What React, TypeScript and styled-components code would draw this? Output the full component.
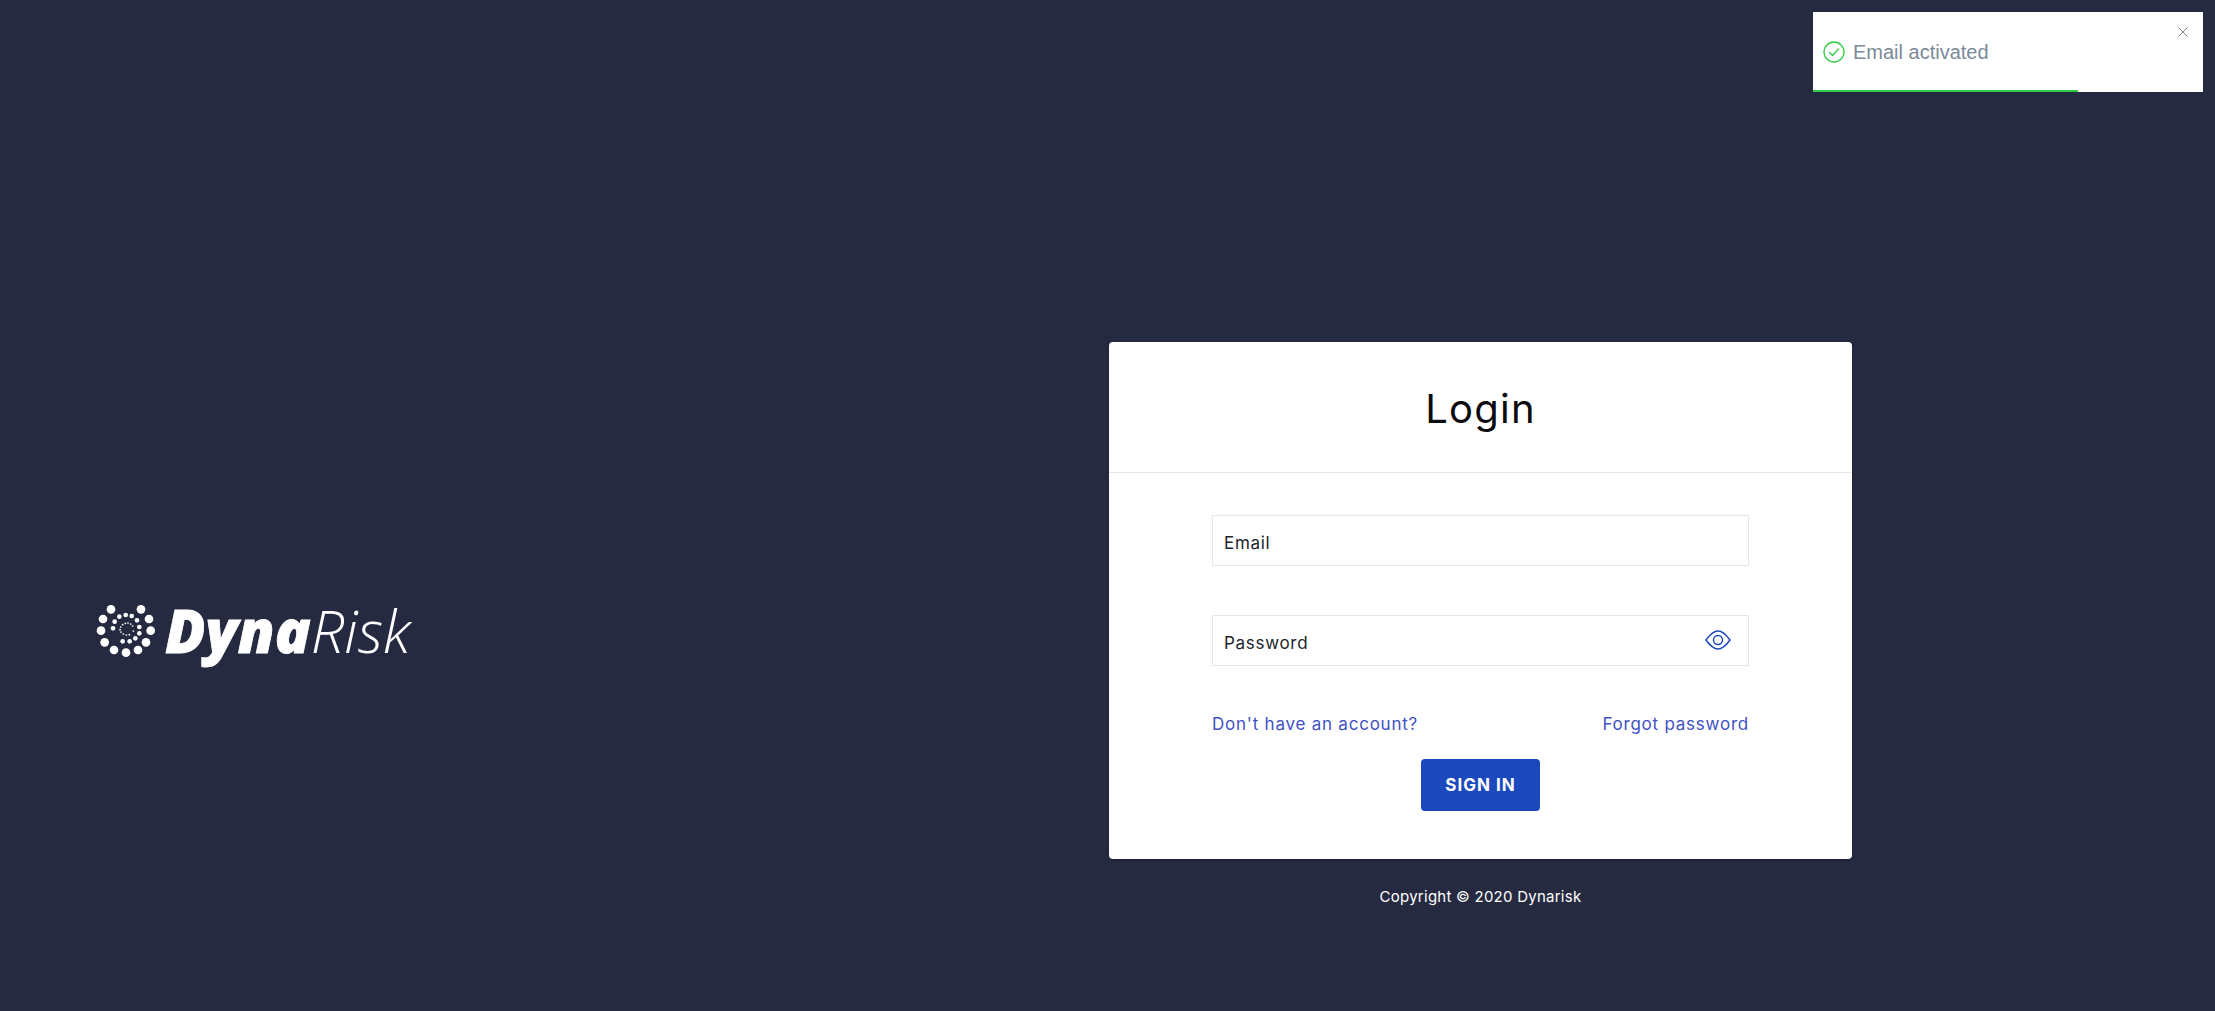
import React from "react";
import styled, { createGlobalStyle } from "styled-components";

const GlobalStyle = createGlobalStyle`
  html, body {
    margin: 0;
    padding: 0;
    background: #252a41;
    overflow: hidden;
  }
  * {
    box-sizing: border-box;
  }
`;

const OUTER_DOTS = [
  [63, 43], [153, 43], [39, 72], [177, 72], [33, 107], [182, 107],
  [44, 142], [168, 142], [72, 165], [108, 173], [144, 165],
];
const MIDDLE_DOTS = [
  [88, 65], [107, 60], [125, 63], [141, 76], [148, 96], [148, 115],
  [136, 130], [119, 139], [98, 139], [74, 80], [69, 100],
];
const INNER_DOTS = [
  [92, 96], [98, 89], [106, 85], [114, 84], [122, 87], [128, 93],
  [90, 104], [93, 111], [100, 117], [109, 120], [118, 119], [130, 108],
];

const LogoMark = () => (
  <LogoSvg viewBox="0 0 225 210" aria-hidden="true">
    {OUTER_DOTS.map(([x, y]) => <circle key={`o${x}${y}`} cx={x} cy={y} r={13} fill="#fff" />)}
    {MIDDLE_DOTS.map(([x, y]) => <circle key={`m${x}${y}`} cx={x} cy={y} r={7} fill="#fff" />)}
    {INNER_DOTS.map(([x, y]) => <circle key={`i${x}${y}`} cx={x} cy={y} r={2.6} fill="#fff" />)}
  </LogoSvg>
);

const EyeIcon = () => (
  <EyeSvg viewBox="0 0 26 20" fill="none" stroke="#1c48bd" strokeWidth="1.5" aria-hidden="true">
    <path d="M1 10C5 4.500 8.500 1 13 1s8 3.500 12 9c-4 5.500-7.500 9-12 9S5 15.500 1 10Z" strokeLinejoin="round" />
    <circle cx="13" cy="10" r="4.500" />
  </EyeSvg>
);

export default function App() {
  return (
    <>
      <GlobalStyle />
      <Page>
        <Toast>
          <ToastBody>
            <svg width="22" height="22" viewBox="0 0 22 22" fill="none" stroke="#2ecc40" strokeWidth="1.3" aria-hidden="true">
              <circle cx="11" cy="11" r="10" />
              <path d="M6.500 11.500l3 3 6-6.500" strokeLinecap="round" strokeLinejoin="round" />
            </svg>
            <ToastText>Email activated</ToastText>
          </ToastBody>
          <ToastClose viewBox="0 0 10 10" stroke="#75828f" strokeWidth="1" aria-hidden="true">
            <path d="M0.500 0.500l9 9M9.500 0.500l-9 9" />
          </ToastClose>
          <ToastProgress $percent={68} />
        </Toast>

        <Brand>
          <LogoMark />
          <Wordmark>
            <WordBold>Dyna</WordBold>
            <WordLight>Risk</WordLight>
          </Wordmark>
        </Brand>

        <Column>
          <Card>
            <CardHeader>
              <Title>Login</Title>
            </CardHeader>
            <CardBody>
              <Field>
                <FieldInput type="text" placeholder="Email" />
              </Field>
              <Field>
                <FieldInput type="password" placeholder="Password" />
                <EyeIcon />
              </Field>
              <LinkRow>
                <TextLink href="#">Don't have an account?</TextLink>
                <TextLink href="#">Forgot password</TextLink>
              </LinkRow>
              <SubmitButton type="button">SIGN IN</SubmitButton>
            </CardBody>
          </Card>
          <Copyright>Copyright © 2020 Dynarisk</Copyright>
        </Column>
      </Page>
    </>
  );
}

const Page = styled.div`
  position: relative;
  display: flex;
  align-items: center;
  height: 1011px;
  padding: 249px 0 0 90px;
  background: #252a41;
  font-family: Inter, "Open Sans", sans-serif;
`;

const Toast = styled.div`
  position: absolute;
  top: 12px;
  right: 12px;
  width: 390px;
  height: 80px;
  background: #fff;
  display: flex;
  align-items: center;
  padding: 0 0 0 10px;
`;

const ToastBody = styled.div`
  display: flex;
  align-items: center;
  gap: 8px;
`;

const ToastText = styled.span`
  font-family: "Liberation Sans", Arial, sans-serif;
  font-size: 20px;
  color: #7a8a99;
`;

const ToastClose = styled.svg`
  position: absolute;
  top: 15px;
  right: 15px;
  width: 10px;
  height: 10px;
`;

const ToastProgress = styled.div<{ $percent: number }>`
  position: absolute;
  left: 0;
  bottom: 0;
  height: 2px;
  width: ${(p) => p.$percent}%;
  background: #2ecc40;
`;

const Brand = styled.div`
  flex: 0 0 1019px;
  display: flex;
  align-items: center;
`;

const LogoSvg = styled.svg`
  width: 75px;
  height: 70px;
  flex: none;
`;

const Wordmark = styled.div`
  font-family: "Open Sans", sans-serif;
  font-size: 59.300px;
  line-height: 70px;
  font-style: italic;
  color: #fff;
  white-space: nowrap;
`;

const WordBold = styled.span`
  font-weight: 800;
  -webkit-text-stroke: 0.8px #fff;
`;

const WordLight = styled.span`
  font-weight: 300;
`;

const Column = styled.div`
  flex: 0 0 743px;
  display: flex;
  flex-direction: column;
`;

const Card = styled.div`
  background: #fff;
  border-radius: 4px;
  box-shadow: 0 1px 3px rgba(0, 0, 0, 0.3);
`;

const CardHeader = styled.div`
  height: 131px;
  display: flex;
  align-items: center;
  justify-content: center;
  padding-top: 3px;
  border-bottom: 1px solid #e4e6ef;
`;

const Title = styled.h1`
  margin: 0;
  font-size: 40px;
  font-weight: 400;
  letter-spacing: 1.2px;
  color: #0b0b0f;
`;

const CardBody = styled.div`
  display: flex;
  flex-direction: column;
  padding: 42px 103px 48px;
`;

const Field = styled.div`
  position: relative;
  height: 51px;
  border: 1px solid #e4e6ef;
  display: flex;
  align-items: center;
  padding: 0 17px 0 11px;
  & + & {
    margin-top: 49px;
  }
`;

const FieldInput = styled.input`
  flex: 1;
  min-width: 0;
  border: 0;
  outline: 0;
  padding: 0;
  font-family: inherit;
  font-size: 17px;
  letter-spacing: 0.7px;
  margin-top: 5px;
  color: #212529;
  &::placeholder {
    color: #212529;
    opacity: 1;
  }
`;

const EyeSvg = styled.svg`
  width: 26px;
  height: 20px;
  flex: none;
  margin-top: -2px;
`;

const LinkRow = styled.div`
  display: flex;
  justify-content: space-between;
  line-height: 20px;
  margin: 48px 0 25px;
`;

const TextLink = styled.a`
  font-size: 17px;
  letter-spacing: 0.77px;
  color: #3f51c5;
  text-decoration: none;
`;

const SubmitButton = styled.button`
  align-self: center;
  width: 119px;
  height: 52px;
  border: 0;
  border-radius: 4px;
  background: #1c48bd;
  color: #fff;
  font-family: inherit;
  font-size: 17px;
  font-weight: 700;
  letter-spacing: 1px;
`;

const Copyright = styled.div`
  height: 59px;
  padding-top: 27px;
  text-align: center;
  font-size: 15px;
  letter-spacing: 0.25px;
  line-height: 22px;
  color: #fff;
`;
